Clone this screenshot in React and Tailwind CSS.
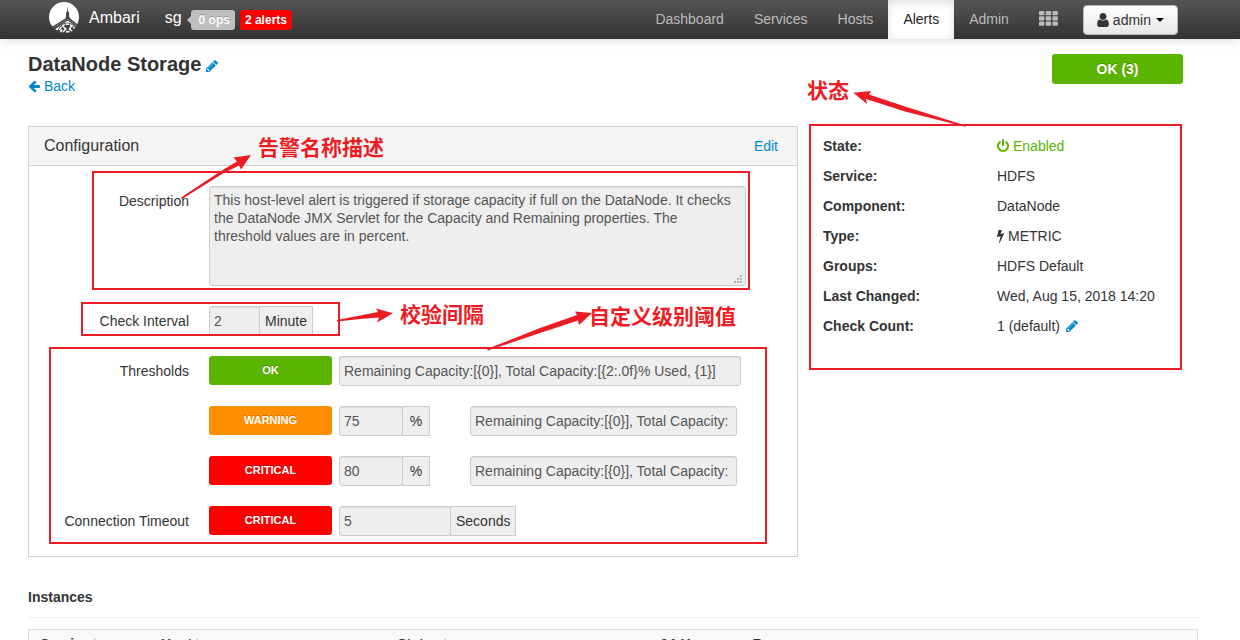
import React from "react";

const ICONS = {
  pencil:
    "M491 1536l91-91-235-235-91 91v107h128v128h107zM1014 608q0-22-22-22-10 0-17 7l-542 542q-7 7-7 17 0 22 22 22 10 0 17-7l542-542q7-7 7-17zM960 416l416 416-832 832h-416v-416zM1643 512q0 53-37 90l-166 166-416-416 166-165q36-38 90-38 53 0 91 38l235 234q37 39 37 91z",
  power:
    "M1664 896q0 156-61 298t-164 245-245 164-298 61-298-61-245-164-164-245-61-298q0-182 80.5-343t226.5-270q43-32 95.5-25t83.5 50q32 42 24.5 94.5t-49.5 84.5q-98 74-151.5 181t-53.5 228q0 104 40.5 198.5t109.5 163.5 163.5 109.5 198.5 40.5 198.5-40.5 163.5-109.5 109.5-163.5 40.5-198.5q0-121-53.5-228t-151.5-181q-42-32-49.5-84.5t24.5-94.5q31-43 84-50t95 25q146 109 226.5 270t80.5 343zm-640-768v640q0 52-38 90t-90 38-90-38-38-90v-640q0-52 38-90t90-38 90 38 38 90z",
  arrowLeft:
    "M1664 896v128q0 53-32.5 90.5t-84.5 37.5h-704l293 294q38 36 38 90t-38 90l-75 76q-37 37-90 37-52 0-91-37l-651-652q-37-37-37-90 0-52 37-91l651-650q38-38 91-38 52 0 90 38l75 74q38 38 38 91t-38 91l-293 293h704q52 0 84.5 37.5t32.5 90.5z",
  bolt:
    "M1333 566q18 20 7 44l-540 1157q-13 25-42 25-4 0-14-2-17-5-25.5-19t-4.5-30l197-808-406 101q-4 1-12 1-18 0-31-11-18-15-13-39l201-825q4-14 16-23t28-9h328q19 0 32 12.5t13 29.5q0 8-5 18l-171 463 396-98q8-2 12-2 19 0 34 15z",
  user:
    "M1536 1399q0 109-62.5 187t-150.5 78h-854q-88 0-150.5-78t-62.5-187q0-85 8.5-160.5t31.5-152 58.5-131 94-89 134.5-34.5q131 128 313 128t313-128q76 0 134.5 34.5t94 89 58.5 131 31.5 152 8.5 160.5zm-256-887q0 159-112.5 271.5t-271.5 112.5-271.5-112.5-112.5-271.5 112.5-271.5 271.5-112.5 271.5 112.5 112.5 271.5z",
};

function Icon({ name, viewBox = "0 0 1792 1792", className }) {
  return (
    <svg viewBox={viewBox} className={className} fill="currentColor" aria-hidden="true">
      <path d={ICONS[name]} />
    </svg>
  );
}

function Logo() {
  return (
    <svg viewBox="0 0 30 32" className="h-8 w-[30px]" aria-hidden="true">
      <circle cx="15" cy="15" r="15" fill="#fff" />
      <path d="M18.6 4 L19.1 9 L20 10.5 L20.2 15 L22 17.3 L30 23.6 L28.5 26 L18.8 18.6 L5 28 L2.5 25 L16 16.8 L17 15 L17.2 10.5 L18.1 9 Z" fill="#444" />
      <path d="M5 25.3 L18.8 17 L28 23.8" fill="none" stroke="#ccc" strokeWidth="0.6" strokeDasharray="2 1" />
      <path d="M8.5 28.5 Q11 21.5 18.5 20.6 Q25 21.5 26.8 26.5 L24 31 L10 31 Z" fill="#444" />
      <g fill="none" stroke="#fff" strokeWidth="1.5">
        <path d="M10.5 28 Q12.5 23 18 22 Q23 22.3 25.5 26.5" strokeDasharray="3.5 0.8" />
        <path d="M14 24.5 L16.8 27 L14 30 M22.5 23.8 L20.5 27 L23 29" />
        <path d="M11.5 30 L13 27.5 M17 30 L20.5 29.6" />
      </g>
    </svg>
  );
}

function GridIcon() {
  return (
    <svg viewBox="0 0 19 15" className="h-[15px] w-[19px]" fill="currentColor" aria-hidden="true">
      {[0, 5.3, 10.6].map((y) =>
        [0, 6.7, 13.4].map((x) => <rect key={`${x}-${y}`} x={x} y={y} width="5.4" height="4.2" rx="0.8" />)
      )}
    </svg>
  );
}

function Header() {
  const link = "px-[15px] leading-[39px] text-[#bbb]";
  return (
    <header className="flex h-[39px] items-center justify-between bg-linear-to-b from-[#555] to-[#333] pr-[62px] pl-[49px] shadow-[0_1px_10px_rgba(0,0,0,0.15)]">
      <div className="flex items-center text-base text-white">
        <a href="#home" className="flex items-center gap-2.5 pb-1">
          <Logo />
          <span>Ambari</span>
        </a>
        <a href="#cluster" className="ml-[25px] pb-1">sg</a>
        <a href="#ops" className="ml-[5px] flex items-center text-xs font-bold [text-shadow:0_-1px_0_rgba(0,0,0,0.25)]">
          <svg viewBox="0 0 4 8" className="h-2 w-1" fill="#bfbfbf" aria-hidden="true">
            <path d="M4 0 L0 4 L4 8 Z" />
          </svg>
          <span className="rounded-[3px] bg-[#bfbfbf] pr-[5px] pl-2 leading-5">0 ops</span>
        </a>
        <a href="#alerts" className="ml-[5px] rounded-[3px] bg-[#f00] px-[5px] text-xs leading-5 font-bold [text-shadow:0_-1px_0_rgba(0,0,0,0.25)]">
          2 alerts
        </a>
      </div>
      <nav className="flex items-center">
        <a href="#dashboard" className={link}>Dashboard</a>
        <a href="#services" className={link}>Services</a>
        <a href="#hosts" className={link}>Hosts</a>
        <a href="#alerts" className="bg-white px-[15px] leading-[39px] text-[#222] shadow-[inset_0_3px_8px_rgba(0,0,0,0.125)]">Alerts</a>
        <a href="#admin" className={link}>Admin</a>
        <a href="#views" aria-label="Views" className="px-[15px] pb-[3px] text-[#bbb]">
          <GridIcon />
        </a>
        <button type="button" className="ml-2.5 flex h-[30px] items-center rounded border border-[#bbb] bg-linear-to-b from-white to-[#e6e6e6] px-[13px] text-[#333]">
          <Icon name="user" viewBox="256 128 1280 1536" className="mr-1 h-3.5 w-3" />
          admin
          <svg viewBox="0 0 8 4" className="ml-[5px] h-1 w-2" fill="#000" aria-hidden="true">
            <path d="M0 0H8L4 4Z" />
          </svg>
        </button>
      </nav>
    </header>
  );
}

function Row({ label, htmlFor, children }) {
  return (
    <div className="flex items-start">
      <label htmlFor={htmlFor} className="mr-5 w-40 shrink-0 text-right leading-[30px] text-[#333]">{label}</label>
      <div className="flex min-w-0 grow items-start">{children}</div>
    </div>
  );
}

const FIELD =
  "h-[30px] rounded-[3px] border border-[#ccc] bg-[#eee] pl-1 pr-2 text-[#555] shadow-[inset_0_1px_1px_rgba(0,0,0,0.075)]";
const ADDON = "-ml-px h-[30px] border border-[#ccc] bg-[#eee] text-center leading-7 text-[#333]";

function Badge({ color, children }) {
  return (
    <span className={`mr-[7px] h-[29px] w-[123px] shrink-0 rounded-[3px] text-center text-[11px] leading-7 font-bold text-white [text-shadow:0_-1px_0_rgba(0,0,0,0.25)] ${color}`}>
      {children}
    </span>
  );
}

function ThresholdRow({ name, color, value }) {
  return (
    <Row label="" htmlFor={`${name}-value`}>
      <Badge color={color}>{name}</Badge>
      <input id={`${name}-value`} aria-label={`${name} threshold`} readOnly value={value} className={`w-16 ${FIELD}`} />
      <span className={`w-7 ${ADDON}`}>%</span>
      <input
        aria-label={`${name} text`}
        readOnly
        value="Remaining Capacity:[{0}], Total Capacity:[{2:.0f}% Used, {1}]"
        className={`ml-10 w-[267px] ${FIELD}`}
      />
    </Row>
  );
}

function Configuration() {
  return (
    <section className="border border-[#d0d0d0]">
      <div className="flex h-[39px] items-center justify-between border-b border-[#d0d0d0] bg-[#f5f5f5] pr-[19px] pl-[15px]">
        <h2 className="text-base text-[#333]">Configuration</h2>
        <a href="#edit" className="text-[#08c]">Edit</a>
      </div>
      <form className="flex flex-col gap-5 py-5">
        <Row label="Description" htmlFor="description">
          <div className="relative w-[537px]">
            <textarea
              id="description"
              readOnly
              value="This host-level alert is triggered if storage capacity if full on the DataNode. It checks the DataNode JMX Servlet for the Capacity and Remaining properties. The threshold values are in percent."
              className="block h-[100px] w-full resize-none overflow-hidden rounded-[3px] border border-[#ccc] bg-[#eee] py-1 pr-2 pl-1 leading-[18px] text-[#555] shadow-[inset_0_1px_1px_rgba(0,0,0,0.075)]"
            />
            <svg viewBox="0 0 8 8" className="absolute right-1 bottom-[3px] h-2 w-2" fill="#b4b4b4" aria-hidden="true">
              <path d="M6 0h2v2h-2zM3 3h2v2h-2zM6 3h2v2h-2zM0 6h2v2h-2zM3 6h2v2h-2zM6 6h2v2h-2z" />
            </svg>
          </div>
        </Row>
        <Row label="Check Interval" htmlFor="interval">
          <input id="interval" readOnly value="2" className={`w-[51px] ${FIELD}`} />
          <span className={`px-[5px] ${ADDON}`}>Minute</span>
        </Row>
        <Row label="Thresholds" htmlFor="ok-text">
          <Badge color="bg-[#5ab400]">OK</Badge>
          <input id="ok-text" readOnly value="Remaining Capacity:[{0}], Total Capacity:[{2:.0f}% Used, {1}]" className={`w-[402px] ${FIELD}`} />
        </Row>
        <ThresholdRow name="WARNING" color="bg-[#ff8e00]" value="75" />
        <ThresholdRow name="CRITICAL" color="bg-[#f00]" value="80" />
        <Row label="Connection Timeout" htmlFor="timeout">
          <Badge color="bg-[#f00]">CRITICAL</Badge>
          <input id="timeout" readOnly value="5" className={`w-[112px] ${FIELD}`} />
          <span className={`px-[5px] ${ADDON}`}>Seconds</span>
        </Row>
      </form>
    </section>
  );
}

const DETAILS = [
  ["State:", <a href="#state" className="flex items-center text-[#5ab400]"><Icon name="power" viewBox="128 0 1536 1792" className="mr-1 h-3.5 w-3" />Enabled</a>],
  ["Service:", "HDFS"],
  ["Component:", "DataNode"],
  ["Type:", <span className="flex items-center"><Icon name="bolt" viewBox="448 0 896 1792" className="mr-1 h-3.5 w-[7px]" />METRIC</span>],
  ["Groups:", "HDFS Default"],
  ["Last Changed:", "Wed, Aug 15, 2018 14:20"],
  ["Check Count:", <span className="flex items-center">1 (default)<a href="#count" aria-label="Edit check count" className="ml-[5px] text-[#08c]"><Icon name="pencil" className="h-3.5 w-3.5" /></a></span>],
];

function Details() {
  return (
    <dl className="flex flex-col gap-2.5 pt-2.5 pl-[25px]">
      {DETAILS.map(([term, value]) => (
        <div key={term} className="flex">
          <dt className="w-[174px] shrink-0 font-bold">{term}</dt>
          <dd>{value}</dd>
        </div>
      ))}
    </dl>
  );
}

const COLUMNS = [
  { name: "Service", sort: true, width: "w-[10.4%]" },
  { name: "Host", sort: true, width: "w-[20.2%]" },
  { name: "Status", sort: true, width: "w-[22.5%]" },
  { name: "24-Hour", sort: false, width: "w-[7.9%]" },
  { name: "Response", sort: false, width: "w-[39%]" },
];

function Instances() {
  return (
    <section className="mt-[30px]">
      <h2 className="border-b border-[#eee] pb-2.5 font-bold">Instances</h2>
      <table className="mt-[11px] w-full table-fixed border border-[#ddd] bg-[#f9f9f9] text-left">
        <thead>
          <tr>
            {COLUMNS.map((c) => (
              <th key={c.name} className={`py-1 pl-[11px] font-bold ${c.width}`}>
                {c.name}
                {c.sort && (
                  <svg viewBox="0 0 6 11" className="ml-0.5 inline h-[11px] w-1.5 align-baseline" fill="#ccc" aria-hidden="true">
                    <path d="M3 0L6 4.5H0ZM3 11L0 6.5H6Z" />
                  </svg>
                )}
              </th>
            ))}
          </tr>
        </thead>
      </table>
    </section>
  );
}

function Annotations() {
  const box = "absolute border-2 border-[#ed1c24]";
  const note =
    "absolute text-[21px] leading-[30px] font-bold whitespace-nowrap text-[#ed1c24] font-['Noto_Sans_CJK_SC',sans-serif]";
  return (
    <div className="pointer-events-none absolute inset-0 overflow-hidden">
      <div className={`${box} top-[171px] left-[92px] h-[119px] w-[658px]`} />
      <div className={`${box} top-[302px] left-[81px] h-[34px] w-[259px]`} />
      <div className={`${box} top-[347px] left-[49px] h-[197px] w-[718px]`} />
      <div className={`${box} top-[124px] left-[809px] h-[246px] w-[373px]`} />
      <svg width="1240" height="640" className="absolute top-0 left-0" fill="#ed1c24" aria-hidden="true">
        <path d="M181 197.5L221 171L237 161.5L233.5 157.5L251 155L241 169.5L239 165.5L222 174L182 199Z" />
        <path d="M337 320L360 315.5L378 312L376 308.5L393 313.3L377 322.5L379 317.5L360 319L337 321.5Z" />
        <path d="M487 349L540 328L577 315L575 311.5L592 313L579 325L578 320.5L540 333L488 350.5Z" />
        <path d="M966 127L905 111.5L866 99L867 104L853.3 92.7L871 91L869 94.5L905 106.5L964 125Z" />
      </svg>
      <span className={`${note} top-[131px] left-[258px]`}>告警名称描述</span>
      <span className={`${note} top-[298px] left-[400px]`}>校验间隔</span>
      <span className={`${note} top-[300px] left-[589px]`}>自定义级别阈值</span>
      <span className={`${note} top-[74px] left-[807px]`}>状态</span>
    </div>
  );
}

export default function App() {
  return (
    <div className="relative min-h-screen bg-white font-['Liberation_Sans',Arial,sans-serif] text-sm leading-5 text-[#333]">
      <Header />
      <main className="pt-[15px] pr-[42px] pl-7">
        <div className="flex items-start justify-between pr-[15px]">
          <div>
            <h1 className="mb-0.5 flex items-center gap-1 text-xl leading-5 font-bold">
              DataNode Storage
              <a href="#rename" aria-label="Edit name" className="pt-1 text-[#08c]">
                <Icon name="pencil" className="h-3.5 w-3.5" />
              </a>
            </h1>
            <a href="#back" className="flex items-center gap-1 text-[#08c]">
              <Icon name="arrowLeft" viewBox="64 0 1600 1792" className="h-3.5 w-3" />
              Back
            </a>
          </div>
          <button type="button" className="h-[30px] w-[131px] rounded-[3px] bg-[#5ab400] font-bold text-white [text-shadow:0_-1px_0_rgba(0,0,0,0.25)]">
            OK (3)
          </button>
        </div>
        <div className="mt-[30px] grid grid-cols-[77fr_40fr]">
          <Configuration />
          <Details />
        </div>
        <Instances />
      </main>
      <Annotations />
    </div>
  );
}
